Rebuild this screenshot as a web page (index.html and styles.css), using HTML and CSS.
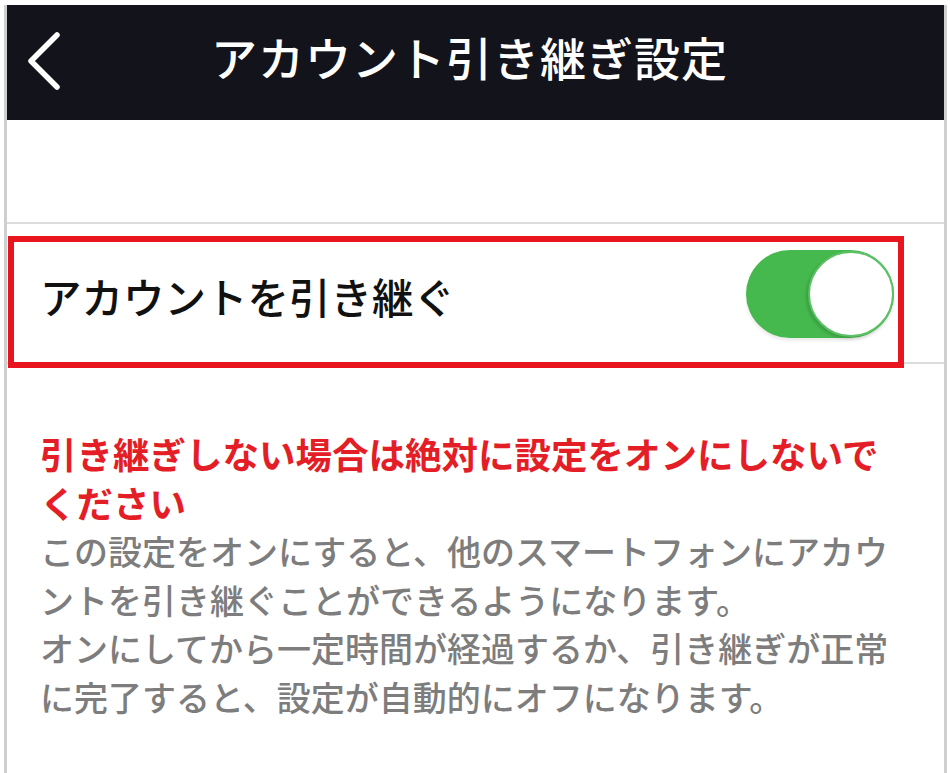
FILE: index.html
```html
<!DOCTYPE html>
<html lang="ja">
<head>
    <meta charset="UTF-8">
    <meta name="viewport" content="width=device-width, initial-scale=1.0">
    <title>アカウント引き継ぎ設定</title>
    <link rel="stylesheet" href="styles.css">
</head>
<body>

    <div class="screen">
        <header class="nav-bar">
            <a href="#" class="back-btn" aria-label="戻る">
                <svg width="40" height="64" viewBox="0 0 40 64">
                    <polyline points="30,6 4,32 30,58" fill="none" stroke="#fff" stroke-width="5.5" stroke-linecap="round" stroke-linejoin="round"/>
                </svg>
            </a>
            <h1>アカウント引き継ぎ設定</h1>
        </header>

        <div class="spacer"></div>

        <!-- Toggle row (highlighted) -->
        <div class="setting-row-wrap">
            <div class="setting-row">
                <span class="setting-label">アカウントを引き継ぐ</span>
                <label class="switch">
                    <input type="checkbox" checked>
                    <span class="knob"></span>
                </label>
            </div>
        </div>

        <div class="notice">
            <p class="warning">引き継ぎしない場合は絶対に設定をオンにしないでください</p>
            <p class="description">この設定をオンにすると、他のスマートフォンにアカウントを引き継ぐことができるようになります。</p>
            <p class="description">オンにしてから一定時間が経過するか、引き継ぎが正常に完了すると、設定が自動的にオフになります。</p>
        </div>
    </div>

</body>
</html>
```

FILE: styles.css
```css
html, body {
    height: 100%;
}
body {
    font-family: "Noto Sans CJK JP", "Noto Sans", sans-serif;
    background-color: #fff;
    margin: 0;
    padding: 0;
}
.screen {
    box-sizing: border-box;
    margin: 5px 3px 0 4px;
    height: calc(100% - 5px);
    border-left: 3px solid #cfcfcf;
    border-right: 3px solid #cfcfcf;
}
.nav-bar {
    position: relative;
    height: 115px;
    background-color: #13131b;
    display: flex;
    align-items: center;
    justify-content: center;
}
.nav-bar h1 {
    margin: 0 12px 14px 0;
    color: #fff;
    font-size: 46px;
    font-weight: 500;
    letter-spacing: 1px;
}
.back-btn {
    position: absolute;
    left: 20px;
    top: 24px;
    display: block;
}
.spacer {
    height: 102px;
    border-bottom: 2px solid #dcdcdc;
}
.setting-row-wrap {
    margin-top: 12px;
    border-bottom: 2px solid #dcdcdc;
}
.setting-row {
    display: flex;
    align-items: center;
    justify-content: space-between;
    height: 120px;
    margin: 0 40px -6px 1px;
    padding: 0 4px 0 26px;
    border: 6px solid #e8151f;
}
.setting-label {
    font-size: 41.5px;
    font-weight: 500;
    color: #111;
    margin-bottom: 12px;
}
.switch {
    position: relative;
    display: block;
    width: 148px;
    height: 88px;
    margin-bottom: 16px;
}
.switch input {
    display: none;
}
.knob {
    position: absolute;
    inset: 0;
    border-radius: 44px;
    background-color: #45b94d;
    box-shadow: 0 3px 3px rgba(0, 0, 0, 0.08);
}
.knob::after {
    content: "";
    position: absolute;
    right: 0;
    top: 1px;
    box-sizing: border-box;
    width: 86px;
    height: 86px;
    border-radius: 50%;
    background-color: #fff;
    border: 2px solid #5cc064;
    box-shadow: -2px 2px 3px rgba(0, 0, 0, 0.15);
}
.notice {
    width: 856px;
    padding: 66px 0 0 33px;
}
.notice p {
    margin: 0;
    line-height: 48.5px;
}
.warning {
    color: #e41e26;
    font-size: 36.5px;
    font-weight: 700;
    line-height: 49px;
    margin-bottom: 4px;
}
.description {
    color: #7d7d7d;
    font-size: 34px;
    font-weight: 500;
}
```
